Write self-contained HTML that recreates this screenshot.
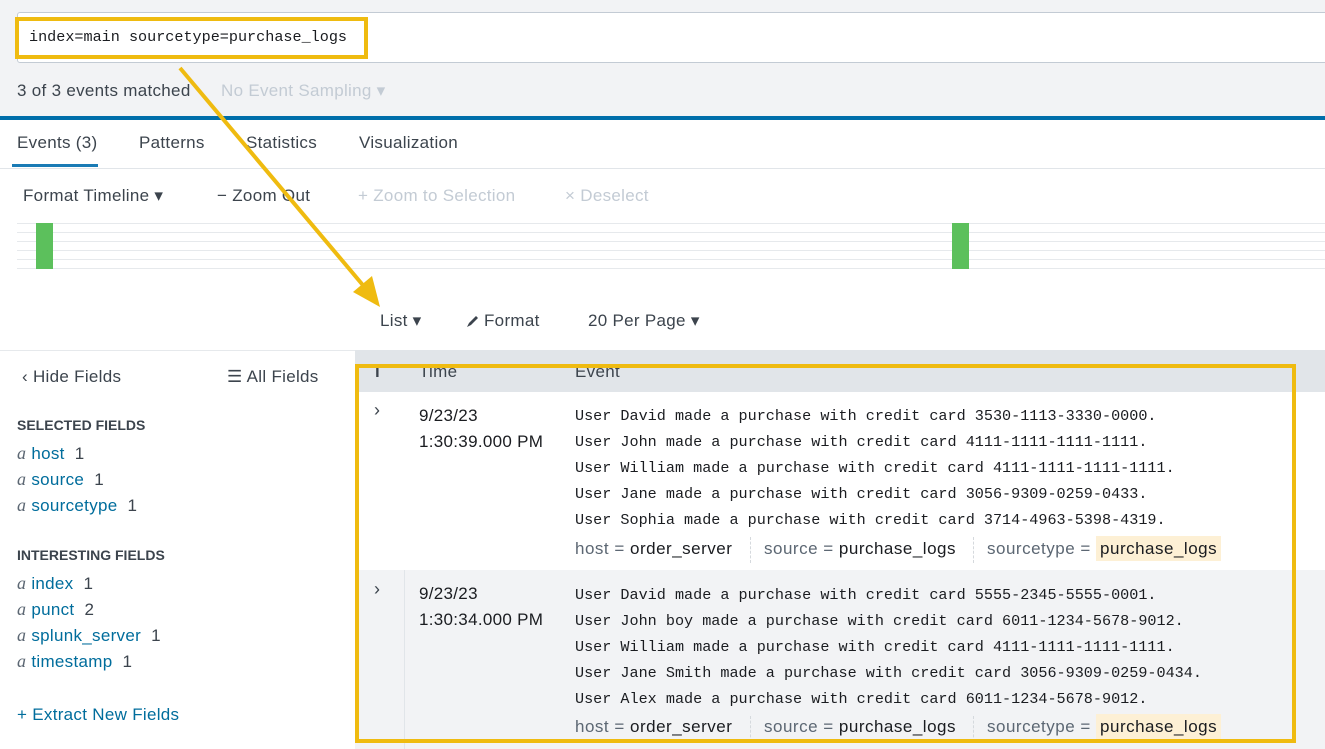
<!DOCTYPE html>
<html><head><meta charset="utf-8"><style>
*{margin:0;padding:0;box-sizing:border-box}
body{width:1325px;height:749px;overflow:hidden;background:#fff;font-family:"Liberation Sans",sans-serif;color:#3c444d;position:relative}
.a{position:absolute;white-space:nowrap}
.mono{font-family:"Liberation Mono",monospace;font-size:15.15px}
.s16{font-size:17px;letter-spacing:0.3px}
.g{color:#c3cbd4}
.tl{position:absolute;left:17px;width:1308px;height:1px;background:#e6e9ec}
.f{color:#1a1c20}
.b{color:#006d9c}
.it{font-family:"Liberation Serif",serif;font-style:italic;color:#5c6773;font-size:18px}
.kv{font-size:17px;letter-spacing:0.5px;color:#5c6773}
.kv b{font-weight:normal;color:#1a1c20}
</style></head><body>
<div class="a" style="left:0;top:0;width:1325px;height:116px;background:#f2f3f5"></div>
<div class="a" style="left:17px;top:12px;width:1320px;height:51px;background:#fff;border:1px solid #c3cbd4;border-radius:3px"></div>
<div class="a mono" style="left:29px;top:28px;color:#1a1c20">index=main sourcetype=purchase_logs</div>
<div class="a" style="left:15px;top:17px;width:353px;height:42px;border:4px solid #efbb10"></div>
<div class="a s16" style="left:17px;top:81px">3 of 3 events matched</div>
<div class="a s16 g" style="left:221px;top:81px">No Event Sampling ▾</div>
<div class="a" style="left:0;top:116px;width:1325px;height:4px;background:#006eaa"></div>
<div class="a s16" style="left:17px;top:133px;color:#3c444d">Events (3)</div>
<div class="a" style="left:12px;top:164px;width:86px;height:3px;background:#1a7bb5"></div>
<div class="a s16" style="left:139px;top:133px">Patterns</div>
<div class="a s16" style="left:246px;top:133px">Statistics</div>
<div class="a s16" style="left:359px;top:133px">Visualization</div>
<div class="a" style="left:0;top:168px;width:1325px;height:1px;background:#e1e5e9"></div>
<div class="a s16" style="left:23px;top:186px">Format Timeline ▾</div>
<div class="a s16" style="left:217px;top:186px">− Zoom Out</div>
<div class="a s16 g" style="left:358px;top:186px">+ Zoom to Selection</div>
<div class="a s16 g" style="left:565px;top:186px">× Deselect</div>
<div class="tl" style="top:223px"></div><div class="tl" style="top:232px"></div><div class="tl" style="top:241px"></div><div class="tl" style="top:250px"></div><div class="tl" style="top:259px"></div><div class="tl" style="top:268px"></div>
<div class="a" style="left:36px;top:223px;width:17px;height:46px;background:#5cc05c"></div>
<div class="a" style="left:952px;top:223px;width:17px;height:46px;background:#5cc05c"></div>
<div class="a s16" style="left:380px;top:311px">List ▾</div>
<svg class="a" style="left:465px;top:314px" width="14" height="14"><path d="M2 13 L4 9 L11 2 L13 4 L6 11 Z" fill="#3c444d"/></svg>
<div class="a s16" style="left:484px;top:311px">Format</div>
<div class="a s16" style="left:588px;top:311px">20 Per Page ▾</div>
<div class="a" style="left:0;top:350px;width:355px;height:1px;background:#e6e9ec"></div>
<div class="a s16" style="left:22px;top:367px">‹ Hide Fields</div>
<div class="a s16" style="left:227px;top:367px">☰ All Fields</div>
<div class="a" style="left:17px;top:417px;font-size:14px;font-weight:bold;color:#3c444d">SELECTED FIELDS</div>
<div class="a s16" style="left:17px;top:443px"><span class="it">a</span> <span class="b">host</span>&nbsp; 1</div>
<div class="a s16" style="left:17px;top:469px"><span class="it">a</span> <span class="b">source</span>&nbsp; 1</div>
<div class="a s16" style="left:17px;top:495px"><span class="it">a</span> <span class="b">sourcetype</span>&nbsp; 1</div>
<div class="a" style="left:17px;top:547px;font-size:14px;font-weight:bold">INTERESTING FIELDS</div>
<div class="a s16" style="left:17px;top:573px"><span class="it">a</span> <span class="b">index</span>&nbsp; 1</div>
<div class="a s16" style="left:17px;top:599px"><span class="it">a</span> <span class="b">punct</span>&nbsp; 2</div>
<div class="a s16" style="left:17px;top:625px"><span class="it">a</span> <span class="b">splunk_server</span>&nbsp; 1</div>
<div class="a s16" style="left:17px;top:651px"><span class="it">a</span> <span class="b">timestamp</span>&nbsp; 1</div>
<div class="a s16 b" style="left:17px;top:705px">+ Extract New Fields</div>
<div class="a" style="left:355px;top:350px;width:970px;height:42px;background:#e1e5e9"></div>
<div class="a s16" style="left:375px;top:362px;font-weight:bold">i</div>
<div class="a s16" style="left:419px;top:362px">Time</div>
<div class="a s16" style="left:575px;top:362px">Event</div>
<div class="a" style="left:355px;top:570px;width:970px;height:179px;background:#f2f3f5"></div>
<div class="a" style="left:404px;top:570px;width:1px;height:179px;background:#e1e5e9"></div>
<div class="a" style="left:374px;top:400px;font-size:18px">›</div>
<div class="a s16" style="left:419px;top:403px;color:#1a1c20;line-height:26px">9/23/23<br>1:30:39.000 PM</div>
<div class="a mono f" style="left:575px;top:403px;line-height:26px">User David made a purchase with credit card 3530-1113-3330-0000.<br>User John made a purchase with credit card 4111-1111-1111-1111.<br>User William made a purchase with credit card 4111-1111-1111-1111.<br>User Jane made a purchase with credit card 3056-9309-0259-0433.<br>User Sophia made a purchase with credit card 3714-4963-5398-4319.</div>
<div class="a kv" style="left:575px;top:539px">host = <b>order_server</b></div>
<div class="a" style="left:750px;top:537px;height:26px;border-left:1px dashed #d5d9dd"></div>
<div class="a kv" style="left:764px;top:539px">source = <b>purchase_logs</b></div>
<div class="a" style="left:973px;top:537px;height:26px;border-left:1px dashed #d5d9dd"></div>
<div class="a kv" style="left:987px;top:539px">sourcetype = <b style="background:#fdf0d5;padding:3px 4px">purchase_logs</b></div>
<div class="a" style="left:374px;top:579px;font-size:18px">›</div>
<div class="a s16" style="left:419px;top:581px;color:#1a1c20;line-height:26px">9/23/23<br>1:30:34.000 PM</div>
<div class="a mono f" style="left:575px;top:582px;line-height:26px">User David made a purchase with credit card 5555-2345-5555-0001.<br>User John boy made a purchase with credit card 6011-1234-5678-9012.<br>User William made a purchase with credit card 4111-1111-1111-1111.<br>User Jane Smith made a purchase with credit card 3056-9309-0259-0434.<br>User Alex made a purchase with credit card 6011-1234-5678-9012.</div>
<div class="a kv" style="left:575px;top:717px">host = <b>order_server</b></div>
<div class="a" style="left:750px;top:716px;height:26px;border-left:1px dashed #d5d9dd"></div>
<div class="a kv" style="left:764px;top:717px">source = <b>purchase_logs</b></div>
<div class="a" style="left:973px;top:716px;height:26px;border-left:1px dashed #d5d9dd"></div>
<div class="a kv" style="left:987px;top:717px">sourcetype = <b style="background:#fdf0d5;padding:3px 4px">purchase_logs</b></div>
<div class="a" style="left:355px;top:364px;width:941px;height:379px;border:4px solid #efbb10"></div>
<svg class="a" style="left:0;top:0" width="1325" height="749"><line x1="180" y1="68" x2="367" y2="290" stroke="#efbb10" stroke-width="4"/><polygon points="380,307 353,292 372,276" fill="#efbb10"/></svg>
</body></html>
